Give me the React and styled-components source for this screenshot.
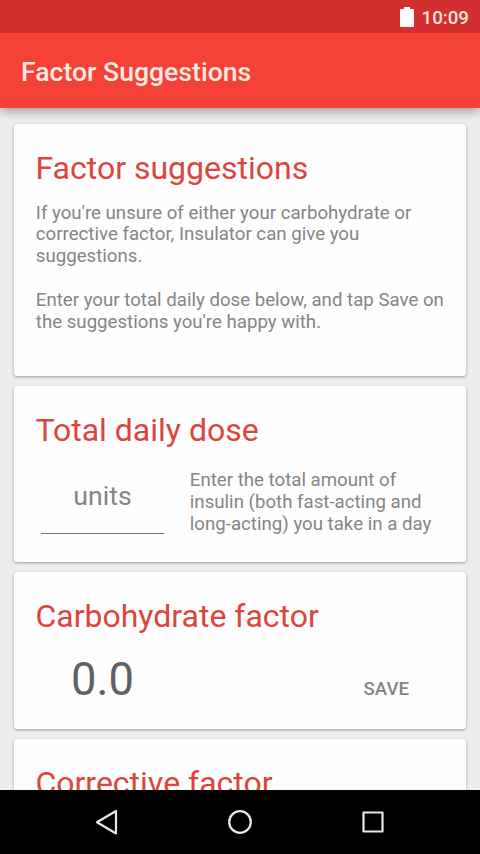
import React, { useState } from "react";
import styled, { createGlobalStyle } from "styled-components";

const GlobalStyle = createGlobalStyle`
  * {
    box-sizing: border-box;
  }

  body {
    margin: 0;
    font-family: Roboto, "Noto Sans", sans-serif;
  }
`;

const StyledScreen = styled.div`
  display: flex;
  flex-direction: column;
  width: 480px;
  height: 854px;
  overflow: hidden;
  background-color: #ededed;
`;

const StatusBar = styled.div`
  flex: none;
  display: flex;
  justify-content: flex-end;
  align-items: center;
  gap: 8px;
  height: 33px;
  padding: 2px 11px 0 0;
  background-color: #d32f2f;
  color: #fde3dc;
  font-size: 18.7px;
  font-weight: 500;
  z-index: 2;

  svg {
    display: block;
    margin-top: -2px;
  }
`;

const AppBar = styled.header`
  flex: none;
  display: flex;
  align-items: center;
  height: 75px;
  padding: 2px 21px 0;
  background-color: #f44336;
  box-shadow: 0 3px 10px rgba(0, 0, 0, 0.35);
  z-index: 1;

  h1 {
    margin: 0;
    color: #fde8e2;
    font-size: 26.6px;
    font-weight: 500;
  }
`;

const CardList = styled.main`
  flex: 1;
  display: flex;
  flex-direction: column;
  gap: 10px;
  min-height: 0;
  padding: 16px 14px 0;
  overflow: hidden;
`;

const Card = styled.section`
  flex: none;
  height: ${props => props.$height}px;
  padding: 25px 22px 0;
  border-radius: 3px;
  background-color: #fefefe;
  box-shadow: 0 1px 3px rgba(0, 0, 0, 0.35);

  h2 {
    margin: 0 0 0 -0.6px;
    color: #dc443c;
    font-size: 32px;
    font-weight: 400;
    line-height: 38px;
  }
`;

const Text = styled.p`
  margin: ${props => props.$top || 0}px 0 0 -0.2px;
  color: #858585;
  font-size: 18.67px;
  line-height: 21.8px;
  white-space: pre;
`;

const DoseRow = styled.div`
  display: flex;
  margin-top: 19px;

  input {
    width: 123px;
    height: 66px;
    margin: 0 26px 0 5px;
    padding: 0 0 9px;
    border: none;
    border-bottom: 1px solid #757575;
    border-radius: 0;
    outline: none;
    background: none;
    color: #616161;
    font-family: inherit;
    font-size: 26.67px;
    text-align: center;

    &::placeholder {
      color: #858585;
      opacity: 1;
    }
  }
`;

const FactorRow = styled.div`
  display: flex;
  align-items: baseline;
  justify-content: space-between;
  margin-top: 18px;
  padding: 0 35px;

  span {
    color: #616161;
    font-size: 45.3px;
    line-height: 54px;
  }

  button {
    padding: 0;
    border: none;
    background: none;
    color: #858585;
    font-family: inherit;
    font-size: 18.67px;
    font-weight: 500;
  }
`;

const NavBar = styled.nav`
  flex: none;
  display: flex;
  justify-content: space-between;
  height: 64px;
  padding: 16px 91px 0;
  background-color: #000;

  svg {
    display: block;
    fill: none;
    stroke: #e8e8e8;
    stroke-width: 2.2;
    stroke-linejoin: round;
  }
`;

const App = () => {
  const [dose, setDose] = useState("");

  const handleChange = e => {
    setDose(e.target.value);
  };

  return (
    <StyledScreen>
      <GlobalStyle />
      <StatusBar>
        <svg width="14" height="20" viewBox="0 0 14 20">
          <path d="M4 0h6v2h3q1 0 1 1v16q0 1-1 1H1q-1 0-1-1V3q0-1 1-1h3z" fill="#fff" />
        </svg>
        10:09
      </StatusBar>
      <AppBar>
        <h1>Factor Suggestions</h1>
      </AppBar>
      <CardList>
        <Card $height={252}>
          <h2>Factor suggestions</h2>
          <Text $top={15.7}>
            {"If you're unsure of either your carbohydrate or\ncorrective factor, Insulator can give you\nsuggestions.\n\nEnter your total daily dose below, and tap Save on\nthe suggestions you're happy with."}
          </Text>
        </Card>
        <Card $height={176}>
          <h2>Total daily dose</h2>
          <DoseRow>
            <input
              type="text"
              name="dose"
              placeholder="units"
              value={dose}
              onChange={handleChange}
            />
            <Text $top={2}>
              {"Enter the total amount of\ninsulin (both fast-acting and\nlong-acting) you take in a day"}
            </Text>
          </DoseRow>
        </Card>
        <Card $height={157}>
          <h2>Carbohydrate factor</h2>
          <FactorRow>
            <span>0.0</span>
            <button type="button">SAVE</button>
          </FactorRow>
        </Card>
        <Card $height={157}>
          <h2>Corrective factor</h2>
        </Card>
      </CardList>
      <NavBar>
        <svg width="32" height="32" viewBox="0 0 32 32">
          <path d="M25 5v22.5L6 16.2z" />
        </svg>
        <svg width="32" height="32" viewBox="0 0 32 32">
          <circle cx="16" cy="16" r="10.8" />
        </svg>
        <svg width="32" height="32" viewBox="0 0 32 32">
          <rect x="6.5" y="6.5" width="19" height="19" />
        </svg>
      </NavBar>
    </StyledScreen>
  );
};

export default App;
